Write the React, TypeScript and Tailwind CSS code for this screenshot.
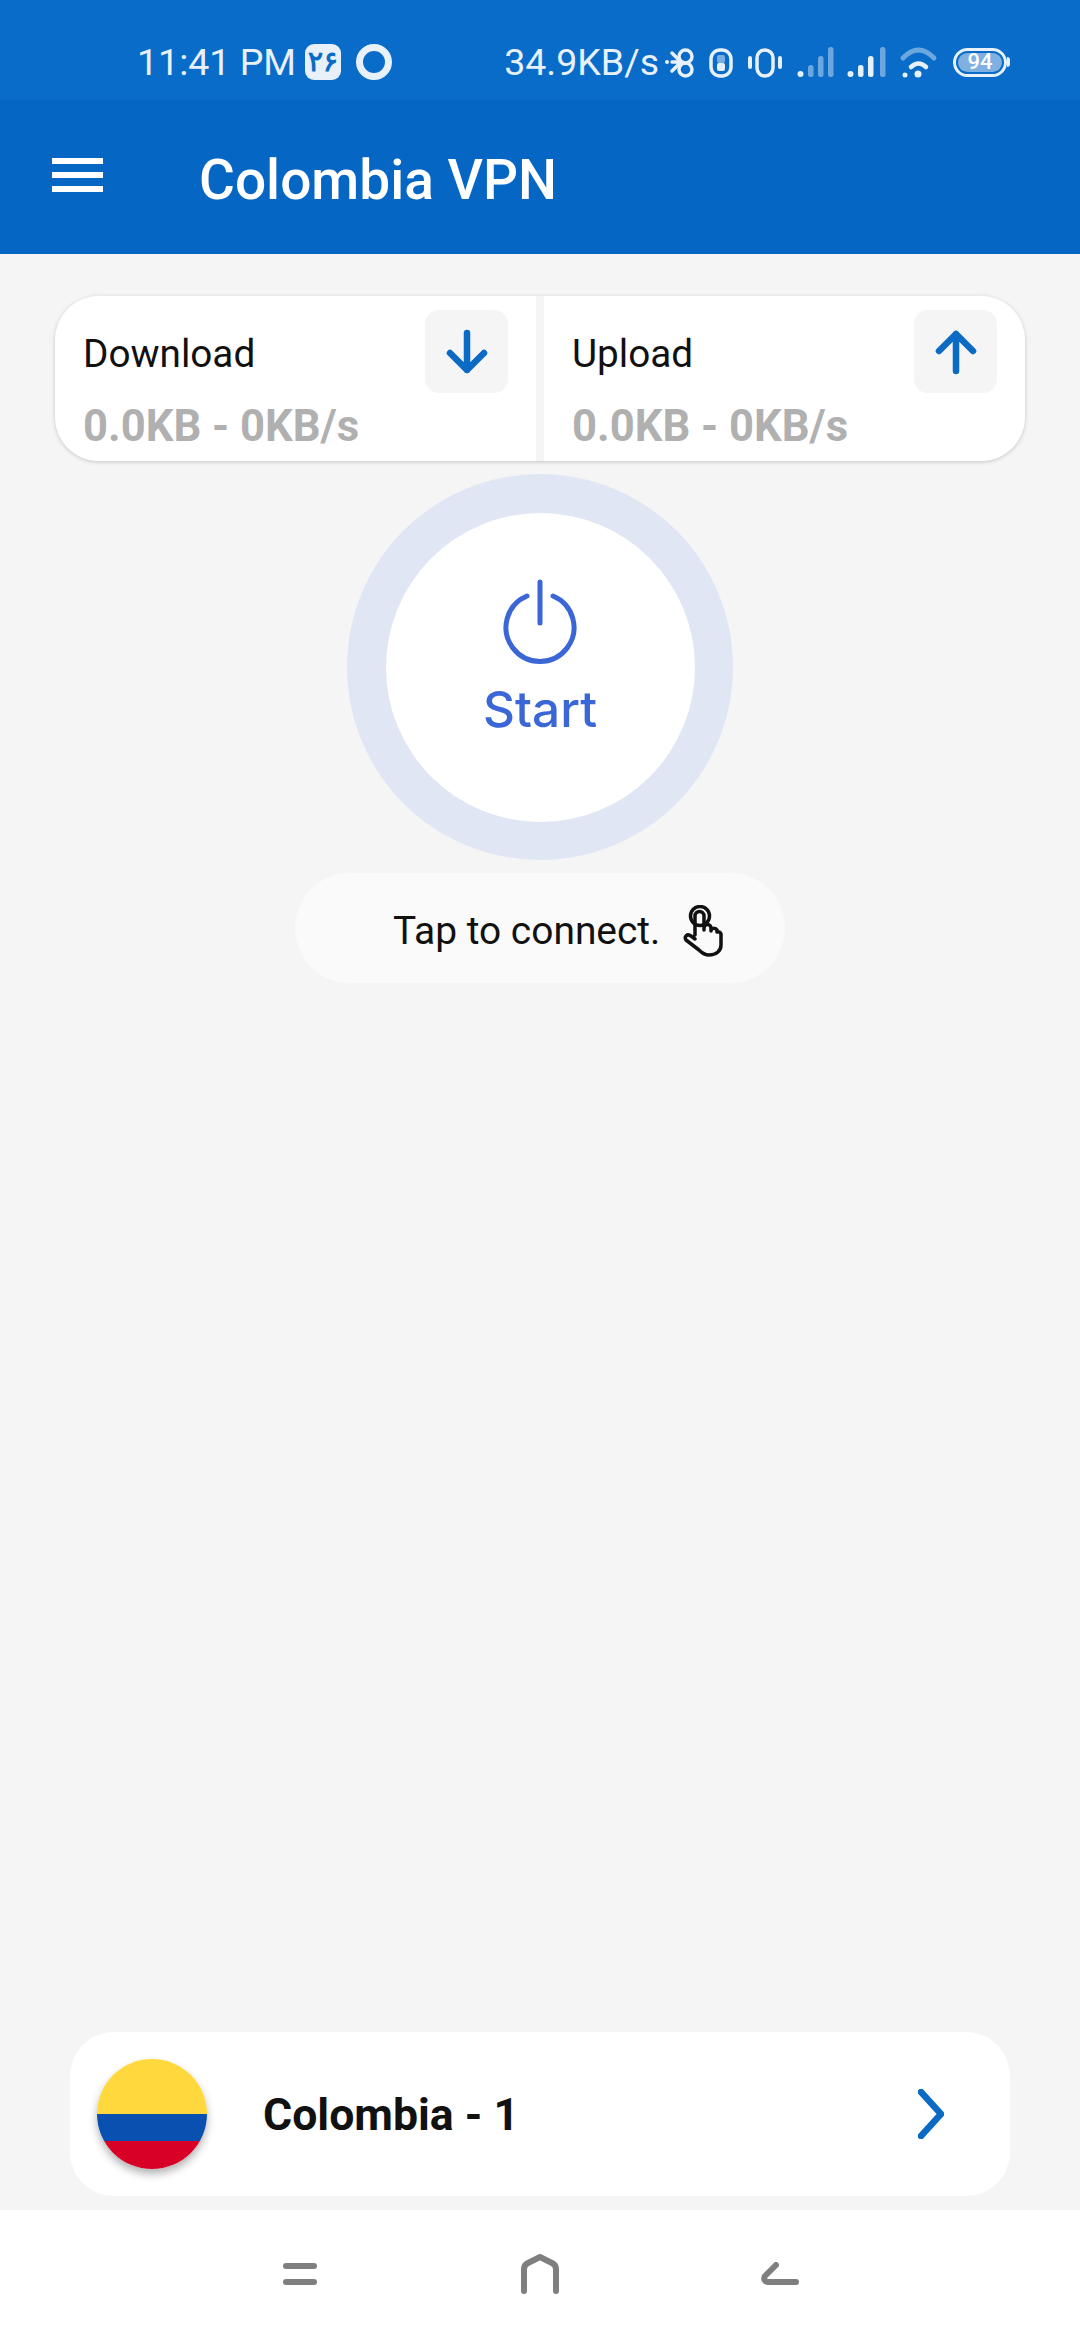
const sans = "font-['Roboto',sans-serif]";

function StatusIcons() {
  return (
    <svg width="280" height="40" viewBox="0 0 280 40" fill="none" className="text-[#e8f0fa]">
      {/* bluetooth + headset */}
      <circle cx="2" cy="20" r="2" fill="currentColor" />
      <g stroke="currentColor" strokeWidth="3.5" strokeLinecap="round" strokeLinejoin="round">
        <path d="M7 11l9 9-9 9M7 20h8" />
        <rect x="14" y="8" width="13" height="13" rx="6.5" />
        <rect x="14" y="21" width="13" height="13" rx="6.5" />
      </g>
      <rect x="46" y="8" width="20" height="26" rx="9" stroke="currentColor" strokeWidth="3.5" />
      <rect x="52" y="13" width="8" height="8" rx="2" fill="currentColor" fillOpacity="0.5" />
      <rect x="52" y="21" width="8" height="8" rx="2" fill="currentColor" />
      {/* vibrate */}
      <rect x="92" y="8" width="16" height="26" rx="8" stroke="currentColor" strokeWidth="3.5" />
      <path d="M85 16v9M115 16v9" stroke="currentColor" strokeWidth="4" strokeLinecap="round" />
      {/* signal 1 */}
      <circle cx="135.500" cy="32" r="3" fill="currentColor" />
      <g fill="currentColor" fillOpacity="0.45">
        <rect x="143" y="23" width="5.500" height="12" rx="2.500" />
        <rect x="153" y="14" width="5.500" height="21" rx="2.500" />
        <rect x="163" y="5" width="5.500" height="30" rx="2.500" />
      </g>
      {/* signal 2 */}
      <circle cx="185.500" cy="32" r="3" fill="currentColor" />
      <rect x="193" y="23" width="5.500" height="12" rx="2.500" fill="currentColor" />
      <rect x="203" y="14" width="5.500" height="21" rx="2.500" fill="currentColor" />
      <rect x="215" y="5" width="5.500" height="30" rx="2.500" fill="currentColor" fillOpacity="0.45" />
      {/* wifi */}
      <path d="M238 16Q253.500 0 269 16" stroke="currentColor" strokeOpacity="0.45" strokeWidth="5" strokeLinecap="round" />
      <path d="M246 25Q253.500 18 261 25" stroke="currentColor" strokeWidth="4.500" strokeLinecap="round" />
      <circle cx="253" cy="32" r="3.500" fill="currentColor" />
      <circle cx="240" cy="33" r="2.500" fill="currentColor" />
    </svg>
  );
}

function Battery() {
  return (
    <div className="flex items-center">
      <div className="flex h-[29px] w-[54px] items-center justify-center rounded-[15px] border-[3.5px] border-[#e8f0fa] p-[2px]">
        <div className={`flex h-full w-full items-center justify-center rounded-[10px] bg-[#7fb0e2] text-[22px] font-medium leading-none text-white ${sans}`}>
          94
        </div>
      </div>
      <div className="h-[10px] w-[3px] rounded-r-full bg-[#e8f0fa]" />
    </div>
  );
}

function StatCard({ label, dir, divider }: { label: string; dir: "down" | "up"; divider?: boolean }) {
  return (
    <div className={`flex flex-1 items-start justify-between bg-white pl-[28px] pr-[28px] pt-[14px] ${divider ? "rounded-l-[44px]" : "rounded-r-[44px]"}`}>
      <div>
        <div className="mt-[22px] text-[38.7px] leading-[44px] text-[#111]">{label}</div>
        <div className="mt-[27px] whitespace-nowrap text-[43.6px] font-bold leading-[48px] text-[#b0b0b0]">0.0KB - 0KB/s</div>
      </div>
      <div className="flex h-[83px] w-[83px] shrink-0 items-center justify-center rounded-[14px] bg-[#f5f5f5]">
        <svg width="44" height="46" viewBox="0 0 44 46" fill="none" stroke="#0a6ac4" strokeWidth="6.500" strokeLinecap="round" strokeLinejoin="round">
          {dir === "down" ? <path d="M22 4v37M5 24l17 17 17-17" /> : <path d="M22 42V5M5 22L22 5l17 17" />}
        </svg>
      </div>
    </div>
  );
}

export default function App() {
  return (
    <div className={`flex h-[2340px] w-[1080px] flex-col overflow-hidden bg-[#f5f5f5] ${sans}`}>
      <div className="flex h-[100px] items-center bg-[#086cc8] pl-[137px] pr-[70px] pt-[24px] text-[#e8f0fa]">
        <span className="pt-[2px] text-[37.5px] leading-none">11:41 PM</span>
        <div className="ml-[9px] flex h-[36px] w-[36px] items-center justify-center rounded-[9px] bg-[#e8f0fa] text-[28px] font-bold leading-none text-[#086cc8]">
          ۲۶
        </div>
        <div className="ml-[15px] h-[36px] w-[36px] rounded-full border-[7px] border-[#e8f0fa]" />
        <span className="ml-auto pt-[2px] text-[37.5px] leading-none">34.9KB/s</span>
        <div className="ml-[6px] h-[40px]">
          <StatusIcons />
        </div>
        <div className="ml-[8px]">
          <Battery />
        </div>
      </div>

      <div className="flex h-[154px] items-center bg-[#0566c4] pl-[52px] pt-[4px]">
        <div className="mb-[8px] flex w-[51px] flex-col gap-[8px]">
          <div className="h-[6px] bg-white" />
          <div className="h-[6px] bg-white" />
          <div className="h-[6px] bg-white" />
        </div>
        <div className="ml-[96px] pt-[2px] text-[55px] font-medium leading-none text-white">Colombia VPN</div>
      </div>

      <div className="flex flex-1 flex-col items-center pt-[42px]">
        <div className="flex h-[165px] w-[970px] gap-[8px] rounded-[44px] shadow-[0_1px_4px_rgba(0,0,0,0.2)]">
          <StatCard label="Download" dir="down" divider />
          <StatCard label="Upload" dir="up" />
        </div>

        <div className="mt-[13px] flex h-[386px] w-[386px] items-center justify-center rounded-full bg-[#e0e6f3]">
          <div className="flex h-[309px] w-[309px] flex-col items-center rounded-full bg-white pt-[66px]">
            <svg width="76" height="86" viewBox="0 0 76 86" fill="none" stroke="#3b66d6" strokeWidth="5" strokeLinecap="round">
              <path d="M38 3v41" />
              <path d="M25 17a34 34 0 1 0 26 0" />
            </svg>
            <div className="mt-[20px] font-['Inter',sans-serif] text-[49.5px] font-medium leading-none text-[#3b66d6]">Start</div>
          </div>
        </div>

        <div className="mt-[13px] flex h-[110px] w-[490px] items-center rounded-[55px] bg-[#fafafa] pl-[98px] pt-[5px]">
          <span className="pt-[2px] text-[38.9px] leading-none text-[#111]">Tap to connect.</span>
          <svg className="ml-[23px]" width="40" height="52" viewBox="0 0 40 52" fill="none" stroke="#111" strokeWidth="3.500" strokeLinecap="round" strokeLinejoin="round">
            <circle cx="17" cy="11" r="9.500" />
            <path d="M12 30V11a4.500 4.500 0 0 1 9 0v14M21 23a3.500 3.500 0 0 1 7 0v3M28 25a3.500 3.500 0 0 1 6 0v2M34 27a3 3 0 0 1 4 2v11c0 6-5 10-12 10-4 0-7-2-10-5L3 35c-2-3 1-7 5-4l4 3" />
          </svg>
        </div>

        <div className="mb-[14px] mt-auto flex h-[164px] w-[940px] items-center rounded-[44px] bg-white pl-[27px] pr-[66px]">
          <div className="flex h-[110px] w-[110px] flex-col overflow-hidden rounded-full shadow-[0_5px_8px_rgba(0,0,0,0.3)]">
            <div className="h-[55px] bg-[#ffd83d]" />
            <div className="h-[27px] bg-[#0a50b0]" />
            <div className="h-[28px] bg-[#d80027]" />
          </div>
          <div className="ml-[56px] pt-[3px] text-[44.6px] font-bold leading-none text-[#111]">Colombia - 1</div>
          <svg className="ml-auto" width="26" height="50" viewBox="0 0 26 50" fill="none" stroke="#0a6ac4" strokeWidth="6.500" strokeLinecap="round" strokeLinejoin="round">
            <path d="M3 3l20 22L3 47" />
          </svg>
        </div>
      </div>

      <div className="flex h-[130px] items-start bg-white pl-[283px] pt-[44px]">
        <div className="flex h-[40px] items-center">
          <div className="flex w-[34px] flex-col gap-[10px]">
            <div className="h-[6px] rounded-full bg-[#7f7f7f]" />
            <div className="h-[6px] rounded-full bg-[#7f7f7f]" />
          </div>
          <svg className="ml-[204px]" width="38" height="40" viewBox="0 0 38 40" fill="none" stroke="#7f7f7f" strokeWidth="6" strokeLinecap="round" strokeLinejoin="round">
            <path d="M3 37V15c0-3 2-5 4-6l12-6 12 6c2 1 4 3 4 6v22" />
          </svg>
          <svg className="ml-[202px]" width="38" height="24" viewBox="0 0 38 24" fill="none" stroke="#7f7f7f" strokeWidth="6" strokeLinecap="round" strokeLinejoin="round">
            <path d="M15 3L4 14c-2 3 0 6 3 6h28" />
          </svg>
        </div>
      </div>
    </div>
  );
}
